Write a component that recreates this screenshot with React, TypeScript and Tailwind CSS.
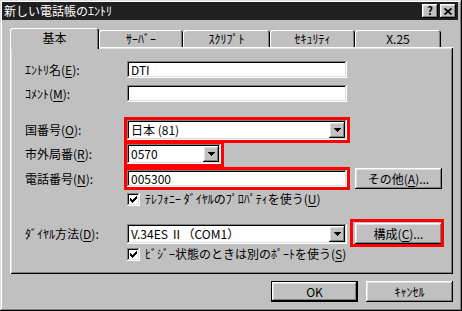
import React from 'react';

const raised =
  'shadow-[inset_-1px_-1px_#000,inset_1px_1px_#fff,inset_-2px_-2px_#808080,inset_2px_2px_#dfdfdf]';
const sunken =
  'shadow-[inset_-1px_-1px_#fff,inset_1px_1px_#808080,inset_-2px_-2px_#dfdfdf,inset_2px_2px_#000]';
const redMark = 'outline-3 outline-solid outline-[#ff0000]';

const Mn = ({ children }: { children: React.ReactNode }) => (
  <span className="underline underline-offset-[2px]">{children}</span>
);

const Row = ({
  label,
  className = '',
  children,
}: {
  label: React.ReactNode;
  className?: string;
  children: React.ReactNode;
}) => (
  <div className={`flex items-center ${className}`}>
    <div className="w-[102px] shrink-0 whitespace-nowrap">{label}</div>
    {children}
  </div>
);

const TextBox = ({ value = '', className = '' }: { value?: string; className?: string }) => (
  <div className={`h-[17px] bg-white flex items-center pl-[4px] ${sunken} ${className}`}>{value}</div>
);

const ArrowDown = () => (
  <svg width="7" height="4" viewBox="0 0 7 4" shapeRendering="crispEdges">
    <rect x="0" y="0" width="7" height="1" fill="#000" />
    <rect x="1" y="1" width="5" height="1" fill="#000" />
    <rect x="2" y="2" width="3" height="1" fill="#000" />
    <rect x="3" y="3" width="1" height="1" fill="#000" />
  </svg>
);

const Combo = ({ value, className = '' }: { value: string; className?: string }) => (
  <div className={`h-[20px] bg-white flex items-center pl-[4px] pr-[2px] ${sunken} ${className}`}>
    <span className="whitespace-nowrap">{value}</span>
    <div className={`ml-auto w-[16px] h-[16px] bg-[#c0c0c0] flex items-center justify-center ${raised}`}>
      <ArrowDown />
    </div>
  </div>
);

const Button = ({ children, className = '' }: { children: React.ReactNode; className?: string }) => (
  <div className={`h-[21px] w-[87px] bg-[#c0c0c0] flex items-center justify-center whitespace-nowrap ${raised} ${className}`}>
    {children}
  </div>
);

const Check = () => (
  <div className={`w-[13px] h-[13px] shrink-0 bg-white flex items-center justify-center ${sunken}`}>
    <svg width="7" height="7" viewBox="0 0 7 7" shapeRendering="crispEdges">
      <rect x="0" y="2" width="1" height="3" fill="#000" />
      <rect x="1" y="3" width="1" height="3" fill="#000" />
      <rect x="2" y="4" width="1" height="3" fill="#000" />
      <rect x="3" y="3" width="1" height="3" fill="#000" />
      <rect x="4" y="2" width="1" height="3" fill="#000" />
      <rect x="5" y="1" width="1" height="3" fill="#000" />
      <rect x="6" y="0" width="1" height="3" fill="#000" />
    </svg>
  </div>
);

const Tab = ({ label, w, active = false }: { label: string; w: string; active?: boolean }) => (
  <div
    className={`${w} flex items-center justify-center rounded-t-[3px] bg-[#c0c0c0] whitespace-nowrap shadow-[inset_1px_1px_#fff,inset_-1px_0_#000,inset_-2px_0_#808080] ${
      active ? 'relative z-10 h-[21px] -mb-[2px] pb-[2px]' : 'h-[17px]'
    }`}
  >
    {label}
  </div>
);

const TitleBtn = ({ children }: { children: React.ReactNode }) => (
  <div className={`w-[16px] h-[14px] bg-[#c0c0c0] flex items-center justify-center ${raised}`}>{children}</div>
);

export default function App() {
  return (
    <div className="w-[462px] h-[311px] overflow-hidden bg-[#c0c0c0] flex flex-col pl-[2px] pr-[4px] pt-[2px] font-['Noto_Sans_CJK_JP',sans-serif] text-[12px] leading-[14px] text-black shadow-[inset_-1px_-1px_#000,inset_1px_1px_#dfdfdf,inset_-2px_-2px_#808080,inset_2px_2px_#fff]">
      {/* title bar */}
      <div className="h-[18px] shrink-0 bg-[#202020] flex items-center pl-[2px] pr-[2px]">
        <span className="text-white whitespace-nowrap">新しい電話帳のｴﾝﾄﾘ</span>
        <div className="ml-auto flex gap-[2px]">
          <TitleBtn>
            <span className="font-bold text-[11px] leading-none -mt-[1px]">?</span>
          </TitleBtn>
          <TitleBtn>
            <svg width="8" height="7" viewBox="0 0 8 7">
              <path d="M0.5 0.5L7.5 6.5M7.5 0.5L0.5 6.5" stroke="#000" strokeWidth="1.8" />
            </svg>
          </TitleBtn>
        </div>
      </div>

      {/* tabs */}
      <div className="mt-[8px] h-[19px] shrink-0 flex items-end pl-[8px]">
        <Tab label="基本" w="w-[89px]" active />
        <Tab label="ｻｰﾊﾞｰ" w="w-[84px]" />
        <Tab label="ｽｸﾘﾌﾟﾄ" w="w-[87px]" />
        <Tab label="ｾｷｭﾘﾃｨ" w="w-[85px]" />
        <Tab label="X.25" w="w-[86px]" />
      </div>

      {/* panel */}
      <div className="ml-[8px] w-[443px] h-[227px] shrink-0 flex flex-col pl-[15px] pt-[14px] shadow-[inset_1px_1px_#fff,inset_-1px_-1px_#000,inset_2px_2px_#dfdfdf,inset_-2px_-2px_#808080]">
        <Row label={<>ｴﾝﾄﾘ名(<Mn>E</Mn>):</>}>
          <TextBox value="DTI" className="w-[220px]" />
        </Row>
        <Row label={<>ｺﾒﾝﾄ(<Mn>M</Mn>):</>} className="mt-[7px]">
          <TextBox className="w-[220px]" />
        </Row>
        <Row label={<>国番号(<Mn>O</Mn>):</>} className="mt-[18px]">
          <Combo value="日本 (81)" className={`w-[220px] ${redMark}`} />
        </Row>
        <Row label={<>市外局番(<Mn>R</Mn>):</>} className="mt-[4px]">
          <Combo value="0570" className={`w-[94px] ${redMark}`} />
        </Row>
        <Row label={<>電話番号(<Mn>N</Mn>):</>} className="mt-[4px] h-[21px]">
          <TextBox value="005300" className={`w-[220px] ${redMark}`} />
          <Button className="ml-[8px]">
            その他(<Mn>A</Mn>)...
          </Button>
        </Row>
        <div className="mt-[3px] ml-[102px] flex items-center gap-[5px] whitespace-nowrap">
          <Check />
          <span>
            ﾃﾚﾌｫﾆｰ ﾀﾞｲﾔﾙのﾌﾟﾛﾊﾟﾃｨを使う(<Mn>U</Mn>)
          </span>
        </div>
        <Row label={<>ﾀﾞｲﾔﾙ方法(<Mn>D</Mn>):</>} className="mt-[17px] h-[21px]">
          <Combo value="V.34ES Ⅱ（COM1）" className="w-[220px]" />
          <div className="relative ml-[8px]">
            <Button>
              構成(<Mn>C</Mn>)...
            </Button>
            <span className="absolute -left-[5px] -right-[2px] -top-[4px] -bottom-[3px] border-[3px] border-[#ff0000]" />
          </div>
        </Row>
        <div className="mt-[3px] ml-[102px] flex items-center gap-[5px] whitespace-nowrap">
          <Check />
          <span>
            ﾋﾞｼﾞｰ状態のときは別のﾎﾟｰﾄを使う(<Mn>S</Mn>)
          </span>
        </div>
      </div>

      {/* bottom buttons */}
      <div className="ml-[8px] w-[443px] mt-[7px] flex justify-end gap-[8px]">
        <Button className="border border-black">OK</Button>
        <Button>ｷｬﾝｾﾙ</Button>
      </div>
    </div>
  );
}
